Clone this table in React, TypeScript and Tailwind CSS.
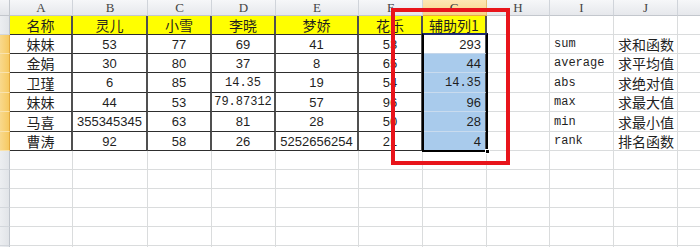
import React from 'react'

const CN = "font-['Noto_Sans_CJK_SC',sans-serif] text-[14px]"
const NUM = "font-['Liberation_Sans',sans-serif] text-[13px]"
const MONO = "font-['Liberation_Mono',monospace] text-[12px]"

// K is only a sliver at the right edge, so its letter is not shown
const cols = [
  { k: 'A', w: 'w-[63px]' },
  { k: 'B', w: 'w-[75px]' },
  { k: 'C', w: 'w-[64px]' },
  { k: 'D', w: 'w-[64px]' },
  { k: 'E', w: 'w-[83px]' },
  { k: 'F', w: 'w-[64px]' },
  { k: 'G', w: 'w-[64px]' },
  { k: 'H', w: 'w-[63px]' },
  { k: 'I', w: 'w-[64px]' },
  { k: 'J', w: 'w-[64px]' },
  { k: '', w: 'w-[64px]' },
]

const rowH = [
  'h-[19px]', 'h-[19px]', 'h-[19px]', 'h-[20px]', 'h-[19px]', 'h-[20px]',
  'h-[19px]', 'h-[19px]', 'h-[19px]', 'h-[19px]', 'h-[19px]', 'h-[19px]', 'h-[19px]',
]

const data: string[][] = [
  ['名称', '灵儿', '小雪', '李晓', '梦娇', '花乐', '辅助列1', '', '', ''],
  ['妹妹', '53', '77', '69', '41', '53', '293', '', 'sum', '求和函数'],
  ['金娟', '30', '80', '37', '8', '65', '44', '', 'average', '求平均值'],
  ['卫瑾', '6', '85', '14.35', '19', '54', '14.35', '', 'abs', '求绝对值'],
  ['妹妹', '44', '53', '79.87312', '57', '96', '96', '', 'max', '求最大值'],
  ['马喜', '355345345', '63', '81', '28', '50', '28', '', 'min', '求最小值'],
  ['曹涛', '92', '58', '26', '5252656254', '21', '4', '', 'rank', '排名函数'],
]

function fontFor(r: number, c: number, v: string) {
  if (r === 0 || c === 0 || c === 9) return CN
  if (c === 8 || v.includes('.')) return MONO
  return NUM
}

function Cell({ r, c }: { r: number; c: number }) {
  const v = data[r]?.[c] ?? ''
  const inTable = r < 7 && c < 7
  const selected = c === 6 && r >= 1 && r < 7
  let cls = 'flex items-center shrink-0 leading-none text-[#1f1f1f] whitespace-nowrap overflow-visible '
  cls += cols[c].w + ' '
  if (inTable) {
    cls += 'border-r-2 border-b border-r-[#505050] border-b-[#2e2e2e] '
  } else {
    cls += 'border-r border-b border-[#dadcdd] '
  }
  if (r === 0 && c < 7) cls += 'bg-[#ffff00] '
  if (selected) {
    cls += r === 1 ? 'bg-white border-b-[#c4d6ea] ' : 'bg-[#a9cbec] border-b-[#c9dbee] '
  }
  if (selected) cls += 'justify-end pr-[4px] '
  else if (c >= 8) cls += 'justify-start pl-[4px] '
  else cls += 'justify-center '
  return <div className={cls}>{v && <span className={fontFor(r, c, v)}>{v}</span>}</div>
}

export default function App() {
  return (
    <div className="relative w-[700px] h-[247px] overflow-hidden bg-white">
      {/* column headers */}
      <div className="flex h-[16px]">
        <div className="w-[10px] shrink-0 bg-gradient-to-b from-[#f4f5f7] to-[#e3e5e9] border-r border-b border-[#c3c7cd]" />
        {cols.map((col, i) => (
          <div
            key={i}
            className={
              'shrink-0 flex items-center justify-center border-r border-b font-["Liberation_Serif",serif] text-[13px] leading-none ' +
              col.w +
              (col.k === 'G'
                ? ' bg-gradient-to-b from-[#fde6b4] to-[#f8d286] border-r-[#e6bf73] border-b-[#e8aa45] text-[#3a3a3a]'
                : ' bg-gradient-to-b from-[#f6f7f9] to-[#e6e8ec] border-r-[#d0d4da] border-b-[#c3c7cd] text-[#444]')
            }
          >
            {col.k}
          </div>
        ))}
      </div>

      {/* rows */}
      {rowH.map((h, r) => (
        <div key={r} className={'flex ' + h}>
          <div
            className={
              'w-[10px] shrink-0 border-r border-b ' +
              (r >= 1 && r < 7
                ? 'bg-gradient-to-r from-[#f9d98c] to-[#f6c960] border-r-[#e3a93f] border-b-[#f9e2ac]'
                : 'bg-gradient-to-r from-[#eceef1] to-[#e1e4e8] border-r-[#bfc4cb] border-b-[#d3d7dc]')
            }
          />
          {cols.map((_, c) => (
            <Cell key={c} r={r} c={c} />
          ))}
        </div>
      ))}

      {/* selection G2:G7 */}
      <div className="absolute left-[422px] top-[33px] w-[66px] h-[119px] border-2 border-black border-t-[#1d2a6e] pointer-events-none" />
      <div className="absolute left-[485px] top-[149px] w-[5px] h-[5px] bg-black border border-white" />

      {/* red annotation */}
      <div className="absolute left-[391px] top-[8px] w-[119px] h-[157px] border-4 border-[#e8141b]" />
    </div>
  )
}
